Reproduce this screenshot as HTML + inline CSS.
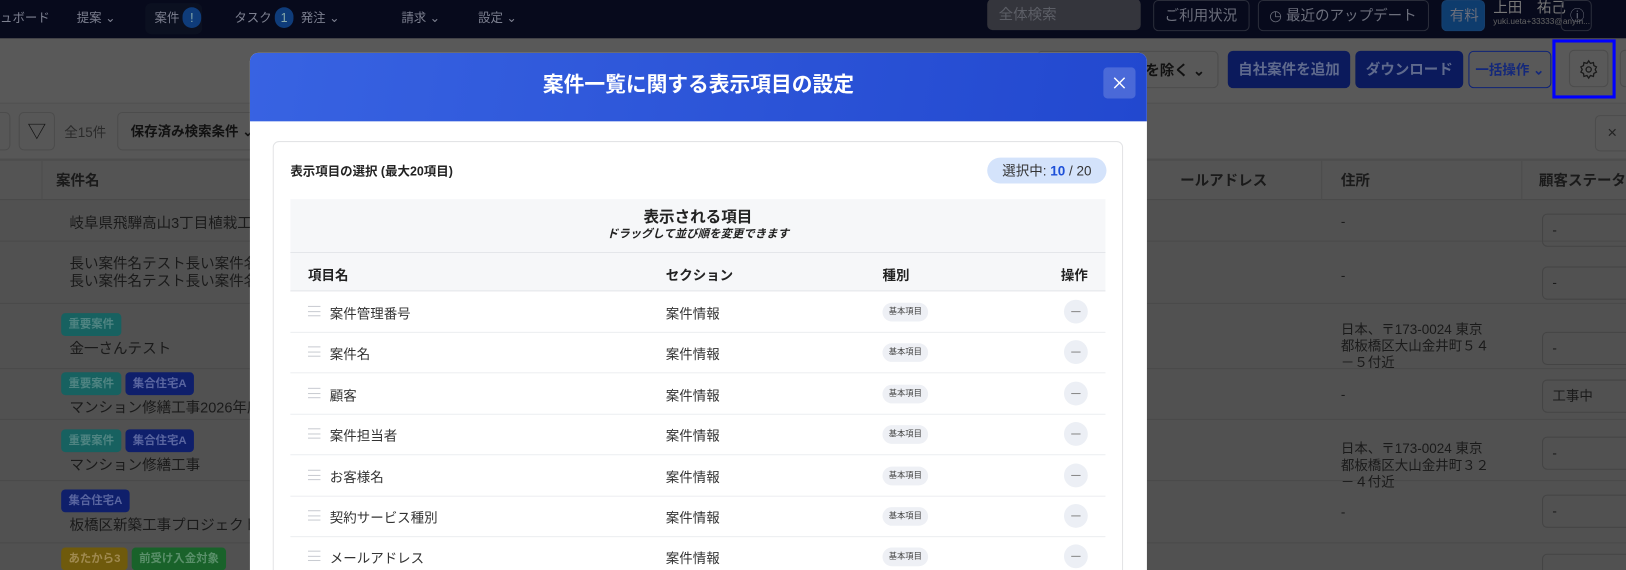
<!DOCTYPE html>
<html><head><meta charset="utf-8">
<style>
*{box-sizing:border-box;margin:0;padding:0}
html,body{width:1626px;height:570px;overflow:hidden}
body{position:relative;background:#575757;font-family:"Liberation Sans","Noto Sans CJK JP",sans-serif;color:#222}
#w{position:absolute;left:0;top:0;width:1568px;height:550px;overflow:hidden;transform:scale(1.037);transform-origin:0 0}
.a{position:absolute;white-space:nowrap}
.nav{left:0;top:0;width:1568px;height:37px;background:#070a1c;color:#7d8090;font-size:12px}
.nav span.i{position:absolute;top:7px;height:20px;line-height:20px;white-space:nowrap}
.bdg{display:inline-block;width:18px;height:20px;border-radius:10px;background:#0f3c7a;color:#8aa;text-align:center;line-height:20px;font-size:12px;vertical-align:top;margin-left:3px}
.nb{position:absolute;top:0;height:30px;border:1px solid #2a2d3a;border-radius:5px;color:#6c6f7c;font-size:14px;line-height:28px;padding:0 10px;white-space:nowrap}
.tb{position:absolute;border-radius:5px;font-size:14px;font-weight:bold;text-align:center;line-height:36px;height:36px;white-space:nowrap}
.row{position:absolute;left:0;width:1568px;border-bottom:1px solid #4a4a4a}
.bt{font-size:14px;color:#1a1a1a}
.tag{display:inline-block;height:22px;line-height:22px;padding:0 7px;border-radius:4px;font-size:11px;font-weight:bold;margin-right:4px}
.sel{position:absolute;left:1487px;width:140px;height:32px;border:1px solid #444;border-radius:5px;font-size:13px;line-height:30px;padding-left:9px;color:#1a1a1a}
.addr{position:absolute;left:1293px;font-size:13px;line-height:16px;color:#1a1a1a;white-space:nowrap}
.modal{left:241px;top:51px;width:865px;height:530px;background:#fff;border-radius:8px 8px 0 0;overflow:hidden}
.mh{height:66px;background:linear-gradient(100deg,#3863e2,#2248cf);color:#fff;font-size:20px;font-weight:bold;text-align:center;line-height:62px}
.mr{position:absolute;left:39px;width:786px;height:40px;border-bottom:1px solid #eceef1;font-size:13px;color:#333}
.mr .n{position:absolute;left:38px;top:11px}
.mr .s{position:absolute;left:362px;top:11px}
.mr .k{position:absolute;left:571px;top:11px;height:18px;line-height:18px;padding:0 6px;border-radius:9px;background:#eef0f5;font-size:8px;color:#444}
.mr .m{position:absolute;left:746px;top:8px;width:23px;height:23px;border-radius:12px;background:#eceff5}
.mr .m:after{content:"";position:absolute;left:7px;top:11px;width:9px;height:1px;background:#888}
.mr .h{position:absolute;left:17px;top:14px;width:12px;height:10px;border-top:1px solid #c9ccd2;border-bottom:1px solid #c9ccd2}
.mr .h:after{content:"";position:absolute;left:0;top:3.5px;width:12px;height:1px;background:#c9ccd2}
</style></head><body><div id="w">
<div class="a nav">
<span class="i" style="left:0">ュボード</span>
<span class="i" style="left:74px">提案 ⌄</span>
<div class="a" style="left:140px;top:3px;width:55px;height:30px;background:#0b1020;border-radius:6px"></div>
<span class="i" style="left:149px">案件<span class="bdg">!</span></span>
<span class="i" style="left:226px">タスク<span class="bdg">1</span></span>
<span class="i" style="left:290px">発注 ⌄</span>
<span class="i" style="left:387px">請求 ⌄</span>
<span class="i" style="left:461px">設定 ⌄</span>
<div class="nb" style="left:952px;width:148px;background:#34353c;border-color:#34353c;color:#5c5e66;top:-1px">全体検索</div>
<div class="nb" style="left:1112px;width:93px">ご利用状況</div>
<div class="nb" style="left:1213px;width:165px">◷ 最近のアップデート</div>
<div class="nb" style="left:1390px;width:42px;background:#0e3c6d;border-color:#163f6d;padding:0 7px">有料</div>
<span class="a" style="left:1440px;top:-3px;font-size:14px;color:#777">上田　祐己</span>
<span class="a" style="left:1440px;top:16px;font-size:8px;color:#666">yuki.ueta+33333@anym...</span>
<div class="nb" style="left:1505px;width:30px;padding:0 8px">ⓘ</div>
</div>
<div class="a" style="left:0;top:37px;width:1568px;height:63px;background:#595959;border-bottom:1px solid #505050"></div>
<div class="tb" style="left:1000px;top:49px;width:175px;border:1px solid #4c4c4c;color:#111;text-align:right;padding-right:12px">を除く ⌄</div>
<div class="tb" style="left:1184px;top:49px;width:118px;background:#0b1a5c;color:#5f6a8d">自社案件を追加</div>
<div class="tb" style="left:1307px;top:49px;width:104px;background:#0b1a5c;color:#5f6a8d">ダウンロード</div>
<div class="tb" style="left:1416px;top:49px;width:80px;border:1px solid #0f2377;color:#14287a;font-size:13px">一括操作 ⌄</div>
<div class="a" style="left:1497px;top:38px;width:61px;height:57px;border:3px solid #0000ff"></div>
<div class="tb" style="left:1513px;top:48px;width:38px;border:1px solid #4c4c4c"><svg width="20" height="20" viewBox="0 0 24 24" style="margin-top:8px" fill="none" stroke="#1a1a1a" stroke-width="1.5"><circle cx="12" cy="12" r="3"/><path d="M12 2l2 3 3.5-1 .5 3.5 3 1.5-1.5 3 1.5 3-3 1.5-.5 3.5-3.5-1-2 3-2-3-3.5 1-.5-3.5-3-1.5 1.5-3-1.5-3 3-1.5.5-3.5 3.5 1z"/></svg></div>
<div class="tb" style="left:1562px;top:48px;width:38px;border:1px solid #4c4c4c;font-size:16px">ⓘ</div>
<div class="a" style="left:0;top:100px;width:1568px;height:53px;background:#575757"></div>
<div class="a" style="left:-10px;top:108px;width:20px;height:37px;border:1px solid #4c4c4c;border-radius:5px"></div>
<div class="a" style="left:18px;top:108px;width:35px;height:37px;border:1px solid #4c4c4c;border-radius:5px;text-align:center;line-height:36px;font-size:18px;color:#111">▽</div>
<span class="a" style="left:62px;top:117px;font-size:13px;color:#2a2a2a">全15件</span>
<div class="a" style="left:113px;top:108px;width:140px;height:37px;border:1px solid #4c4c4c;border-radius:5px;font-size:13px;font-weight:bold;line-height:36px;padding-left:12px;color:#111">保存済み検索条件 ⌄</div>
<div class="a" style="left:1538px;top:111px;width:40px;height:35px;border:1px solid #4c4c4c;border-radius:5px;font-size:16px;line-height:34px;padding-left:11px;color:#222">×</div>
<div class="row" style="top:153px;height:40px;background:#545454;border-top:2px solid #4d4d4d"></div>
<div class="a" style="left:40px;top:155px;width:1px;height:38px;background:#4c4c4c"></div>
<div class="a" style="left:1274px;top:155px;width:1px;height:38px;background:#4c4c4c"></div>
<div class="a" style="left:1467px;top:155px;width:1px;height:38px;background:#4c4c4c"></div>
<span class="a bt" style="left:54px;top:164px;font-weight:bold">案件名</span>
<span class="a bt" style="left:1138px;top:164px;font-weight:bold">ールアドレス</span>
<span class="a bt" style="left:1293px;top:164px;font-weight:bold">住所</span>
<span class="a bt" style="left:1484px;top:164px;font-weight:bold">顧客ステータス</span>
<div class="a" style="left:0;top:193px;width:1568px;height:400px;background:#515151"></div>
<div class="row" style="top:193px;height:40px"></div>
<div class="row" style="top:233px;height:60px"></div>
<div class="row" style="top:293px;height:63px"></div>
<div class="row" style="top:356px;height:49px"></div>
<div class="row" style="top:405px;height:59px"></div>
<div class="row" style="top:464px;height:60px"></div>
<span class="a bt" style="left:67px;top:205px">岐阜県飛騨高山3丁目植栽工事</span>
<span class="a bt" style="left:67px;top:246px;line-height:17px">長い案件名テスト長い案件名<br>長い案件名テスト長い案件名</span>
<div class="a" style="left:59px;top:302px"><span class="tag" style="background:#176160;color:#4f8482">重要案件</span></div>
<span class="a bt" style="left:67px;top:326px">金一さんテスト</span>
<div class="a" style="left:59px;top:359px"><span class="tag" style="background:#176160;color:#4f8482">重要案件</span><span class="tag" style="background:#0f1f6b;color:#5a66a0">集合住宅A</span></div>
<span class="a bt" style="left:67px;top:383px">マンション修繕工事2026年度</span>
<div class="a" style="left:59px;top:414px"><span class="tag" style="background:#176160;color:#4f8482">重要案件</span><span class="tag" style="background:#0f1f6b;color:#5a66a0">集合住宅A</span></div>
<span class="a bt" style="left:67px;top:438px">マンション修繕工事</span>
<div class="a" style="left:59px;top:472px"><span class="tag" style="background:#0f1f6b;color:#5a66a0">集合住宅A</span></div>
<span class="a bt" style="left:67px;top:496px">板橋区新築工事プロジェクト</span>
<div class="a" style="left:59px;top:528px"><span class="tag" style="background:#6f5a0c;color:#a08a50">あたから3</span><span class="tag" style="background:#19622a;color:#5a906a">前受け入金対象</span></div>
<span class="addr" style="top:206px">-</span>
<span class="addr" style="top:258px">-</span>
<span class="addr" style="top:310px">日本、〒173-0024 東京<br>都板橋区大山金井町５４<br>－５付近</span>
<span class="addr" style="top:373px">-</span>
<span class="addr" style="top:425px">日本、〒173-0024 東京<br>都板橋区大山金井町３２<br>－４付近</span>
<span class="addr" style="top:486px">-</span>
<div class="sel" style="top:206px">-</div>
<div class="sel" style="top:257px">-</div>
<div class="sel" style="top:320px">-</div>
<div class="sel" style="top:366px">工事中</div>
<div class="sel" style="top:421px">-</div>
<div class="sel" style="top:477px">-</div>
<div class="sel" style="top:534px">-</div>
<div class="a modal">
<div class="mh">案件一覧に関する表示項目の設定</div>
<div class="a" style="left:823px;top:14px;width:31px;height:30px;background:rgba(255,255,255,0.18);border-radius:4px"><svg width="31" height="30"><path d="M10.5 10l10 10M20.5 10l-10 10" stroke="#fff" stroke-width="1.4"/></svg></div>
<div class="a" style="left:22px;top:85px;width:820px;height:460px;border:1px solid #e3e4e6;border-radius:6px"></div>
<span class="a" style="left:39px;top:105px;font-size:12px;font-weight:bold;color:#222">表示項目の選択 (最大20項目)</span>
<div class="a" style="left:711px;top:101px;width:115px;height:25px;border-radius:13px;background:#d4e3fb;font-size:13px;line-height:25px;text-align:center;color:#333">選択中: <b style="color:#1c4fd8">10</b> / 20</div>
<div class="a" style="left:39px;top:141px;width:786px;height:52px;background:#f6f7f9;border-bottom:1px solid #e4e6ea;text-align:center">
<div style="font-size:15px;font-weight:bold;margin-top:9px;color:#222;line-height:18px">表示される項目</div>
<div style="font-size:11px;font-weight:bold;font-style:italic;color:#222;line-height:14px">ドラッグして並び順を変更できます</div>
</div>
<div class="a" style="left:39px;top:193px;width:786px;height:37px;background:#f6f7f9;border-bottom:1px solid #e4e6ea;font-size:13px;font-weight:bold;color:#222">
<span class="a" style="left:17px;top:11px">項目名</span><span class="a" style="left:362px;top:11px">セクション</span><span class="a" style="left:571px;top:11px">種別</span><span class="a" style="left:743px;top:11px">操作</span></div>
<div class="mr" style="top:230px"><i class="h"></i><span class="n">案件管理番号</span><span class="s">案件情報</span><span class="k">基本項目</span><i class="m"></i></div>
<div class="mr" style="top:269px"><i class="h"></i><span class="n">案件名</span><span class="s">案件情報</span><span class="k">基本項目</span><i class="m"></i></div>
<div class="mr" style="top:309px"><i class="h"></i><span class="n">顧客</span><span class="s">案件情報</span><span class="k">基本項目</span><i class="m"></i></div>
<div class="mr" style="top:348px"><i class="h"></i><span class="n">案件担当者</span><span class="s">案件情報</span><span class="k">基本項目</span><i class="m"></i></div>
<div class="mr" style="top:388px"><i class="h"></i><span class="n">お客様名</span><span class="s">案件情報</span><span class="k">基本項目</span><i class="m"></i></div>
<div class="mr" style="top:427px"><i class="h"></i><span class="n">契約サービス種別</span><span class="s">案件情報</span><span class="k">基本項目</span><i class="m"></i></div>
<div class="mr" style="top:466px"><i class="h"></i><span class="n">メールアドレス</span><span class="s">案件情報</span><span class="k">基本項目</span><i class="m"></i></div>
</div>
</div></body></html>
